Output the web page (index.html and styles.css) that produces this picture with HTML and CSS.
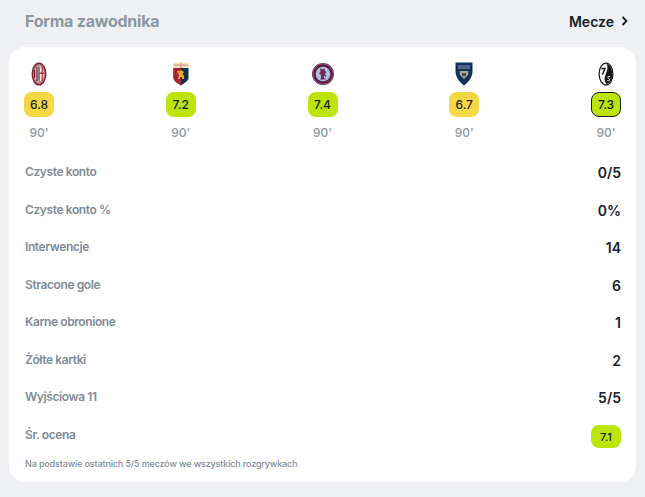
FILE: index.html
```html
<!DOCTYPE html>
<html lang="pl">
<head>
<meta charset="utf-8">
<title>Forma zawodnika</title>
<link rel="stylesheet" href="styles.css">
</head>
<body>
<header class="head">
  <h2 class="title">Forma zawodnika</h2>
  <a class="more">Mecze
    <svg class="chev" width="7" height="10" viewBox="0 0 7 10"><path d="M1.500 1l4 4-4 4" fill="none" stroke="#15202b" stroke-width="1.800"/></svg>
  </a>
</header>
<main class="card">
  <section class="matches">
    <div class="match">
      <svg class="crest" width="22" height="24" viewBox="0 0 22 24"><ellipse cx="11" cy="12" rx="7.500" ry="11.500" fill="#7d2433"/><ellipse cx="11" cy="12" rx="6" ry="10" fill="#b98a90"/><ellipse cx="11" cy="12" rx="5" ry="7.500" fill="#f0e6e6"/><path d="M6 8h1.300v8H6zM8.300 5h1.300v14H8.300z" fill="#6d1725"/><path d="M10.500 5h1v14h-1z" fill="#2a1b1e"/><path d="M13.600 5h1.200v14h-1.200zM11.500 10.500h4.500v1.500h-4.500z" fill="#bd2a38"/></svg>
      <span class="rate yellow">6.8</span><span class="mins">90'</span>
    </div>
    <div class="match">
      <svg class="crest" width="22" height="24" viewBox="0 0 22 24"><path d="M3.500 0.500h15v5.500h-15z" fill="#f2e7b4"/><path d="M3.500 2.500h15v1.300h-15z" fill="#d99a9a"/><path d="M10.300 0.500h1.400v5.500h-1.400z" fill="#d99a9a"/><path d="M3.500 6h15v10c0 3-4 5-7.500 7.500C7.500 21 3.500 19 3.500 16z" fill="#14304d"/><path d="M3.500 6H11v17.500C7.500 21 3.500 19 3.500 16z" fill="#a8262c"/><path d="M7 9h3l1-1 3 2-1.500 2 1.500 2v3h-2v-2h-2v2H8l1-4z" fill="#e8ac30"/></svg>
      <span class="rate lime">7.2</span><span class="mins">90'</span>
    </div>
    <div class="match">
      <svg class="crest" width="22" height="24" viewBox="0 0 22 24"><circle cx="11" cy="12" r="11" fill="#5f1c45"/><circle cx="11" cy="12" r="10.200" fill="none" stroke="#b9a3b4" stroke-width="0.500"/><circle cx="11" cy="12" r="7.300" fill="#a6c3e2"/><path d="M8 6.500l3 1 1.500-1 .5 2.500 1.500 1-1.500 1.500 1.500 3-1 .5-1.500-2v3.500h1.500v1H8l1-1.500V13l-2-1.500 1.500-1.500z" fill="#7a2454"/></svg>
      <span class="rate lime">7.4</span><span class="mins">90'</span>
    </div>
    <div class="match">
      <svg class="crest" width="22" height="24" viewBox="0 0 22 24"><path d="M2.500 0.500h17v9c0 6-4.500 11-8.500 14-4-3-8.500-8-8.500-14z" fill="#14305c"/><path d="M5 3h12v4H5z" fill="#51678a"/><path d="M6.500 9h9l-.5 4-4 4-4-4z" fill="#a5a78c"/><path d="M9 11h4v3h-4z" fill="#3d4f63"/></svg>
      <span class="rate yellow">6.7</span><span class="mins">90'</span>
    </div>
    <div class="match">
      <svg class="crest" width="22" height="24" viewBox="0 0 22 24"><ellipse cx="11" cy="12" rx="7.500" ry="11.500" fill="#161616"/><ellipse cx="11" cy="12" rx="6.300" ry="10.300" fill="#f4f4f4"/><path d="M11.500 2c3 .5 5.800 4 5.800 10s-2.800 9.500-5.800 10c-2-3-2.500-5-1-9s3-8 1-11z" fill="#161616"/><path d="M6.500 6.500h3.500L7.500 12.500" fill="none" stroke="#161616" stroke-width="1.400"/><path d="M15 14.500c-1.500-.5-2.500 0-2 1.200s2 1 1.500 2.300-1.800.7-2.300.3" fill="none" stroke="#f4f4f4" stroke-width="1"/></svg>
      <span class="rate lime ring">7.3</span><span class="mins">90'</span>
    </div>
  </section>
  <dl class="stats">
    <div class="row"><dt>Czyste konto</dt><dd>0/5</dd></div>
    <div class="row"><dt>Czyste konto %</dt><dd>0%</dd></div>
    <div class="row"><dt>Interwencje</dt><dd>14</dd></div>
    <div class="row"><dt>Stracone gole</dt><dd>6</dd></div>
    <div class="row"><dt>Karne obronione</dt><dd>1</dd></div>
    <div class="row"><dt>Żółte kartki</dt><dd>2</dd></div>
    <div class="row"><dt>Wyjściowa 11</dt><dd>5/5</dd></div>
    <div class="row"><dt>Śr. ocena</dt><dd><span class="rate avg lime">7.1</span></dd></div>
  </dl>
  <p class="note">Na podstawie ostatnich 5/5 meczów we wszystkich rozgrywkach</p>
</main>
</body>
</html>
```
FILE: styles.css
```css
* { box-sizing: border-box; }
html, body { margin: 0; padding: 0; }
body {
  height: 497px;
  overflow: hidden;
  background: #eef0f4;
  font-family: Inter, "Liberation Sans", sans-serif;
  color: #15202b;
}
.head {
  height: 47px;
  padding: 0 17px 5px 25px;
  display: flex;
  align-items: center;
  justify-content: space-between;
}
.title {
  margin: 0;
  font-size: 16px;
  font-weight: 700;
  letter-spacing: -0.22px;
  color: #8a98a3;
}
.more {
  display: flex;
  align-items: center;
  gap: 7px;
  font-size: 14px;
  font-weight: 600;
}
.card {
  margin: 0 9px;
  height: 435px;
  background: #fff;
  border-radius: 16px;
  padding: 15px 15px 0;
}
.matches {
  display: flex;
  justify-content: space-between;
}
.match {
  width: 30px;
  display: flex;
  flex-direction: column;
  align-items: center;
}
.crest { display: block; margin-bottom: 6px; }
.rate {
  display: flex;
  align-items: center;
  justify-content: center;
  width: 30px;
  height: 25px;
  border-radius: 8px;
  font-size: 12px;
  font-weight: 500;
  color: #15202b;
}
.yellow { background: #f6d845; }
.lime { background: #bce507; }
.ring { border: 1px solid #15202b; }
.mins {
  margin-top: 8px;
  font-size: 12px;
  line-height: 15px;
  font-weight: 500;
  color: #8a98a3;
}
.stats { margin: 14px 0 0; }
.row {
  height: 37.5px;
  display: flex;
  justify-content: space-between;
  align-items: center;
}
dt {
  margin: -2px 0 0 1px;
  font-size: 12px;
  font-weight: 600;
  letter-spacing: -0.4px;
  color: #7f8b98;
}
dd {
  margin: 0;
  font-size: 14px;
  font-weight: 600;
}
.avg { height: 23px; font-size: 11px; margin-top: 3px; }
.note {
  margin: 4px 0 0 1px;
  font-size: 9px;
  line-height: 12px;
  font-weight: 500;
  letter-spacing: -0.14px;
  color: #7f8b98;
}
```
